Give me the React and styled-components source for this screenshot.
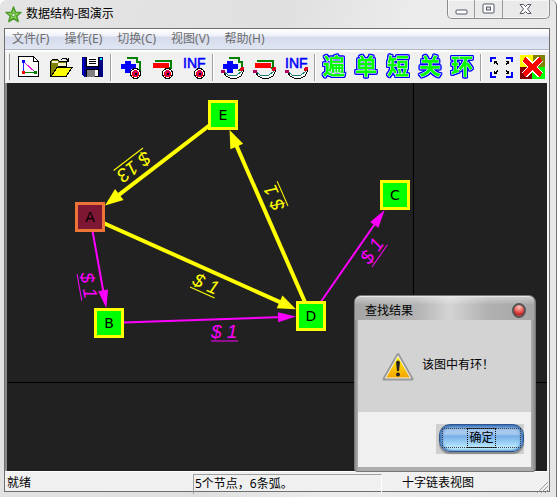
import React from "react";
import styled, { createGlobalStyle, css } from "styled-components";

const GlobalStyle = createGlobalStyle`
  * { box-sizing: border-box; }
  body { margin: 0; background: #fff; }
  body, button {
    font-family: "Noto Sans", "Noto Sans CJK SC", sans-serif;
    font-size: 12px;
    line-height: 18px;
    color: #000;
  }
  button { margin: 0; padding: 0; border: 0; background: none; }
`;

/* ---------- window frame ---------- */

const Window = styled.main`
  display: flex;
  flex-direction: column;
  min-height: 100vh;
  padding: 0 6px 5px 4px;
  border-right: 1px solid #777;
  border-radius: 6px 6px 0 0;
  background: linear-gradient(100deg, #e4e4e4 0%, #e0e0e0 45%, #ececec 65%, #e6e6e6 100%);
`;

const TitleBar = styled.header`
  display: flex;
  height: 28px;
  padding-left: 1px;
`;

const TitleText = styled.h1`
  flex: 1;
  margin: 0;
  padding: 5px 4px 0;
  font-size: 12px;
  font-weight: 400;
  line-height: 18px;
`;

const AppIcon = styled.svg`
  width: 17px;
  height: 17px;
  margin-top: 6px;
`;

const CaptionButtons = styled.div`
  display: flex;
  width: 103px;
  height: 19px;
  border: 1px solid #8c8c8c;
  border-top: 0;
  border-radius: 0 0 5px 5px;
  box-shadow: inset 0 0 0 1px #f6f6f6;
`;

const CaptionButton = styled.button`
  display: flex;
  flex: ${(p) => (p.$wide ? 47 : 27)};
  align-items: center;
  justify-content: center;
  & + & { border-left: 1px solid #9a9a9a; }
`;

const Client = styled.div`
  display: flex;
  flex: 1;
  flex-direction: column;
  border: 1px solid #6f6f6f;
  background: #f0f0f0;
`;

/* ---------- menu and toolbar ---------- */

const MenuBar = styled.nav`
  display: flex;
  gap: 15px;
  height: 21px;
  padding-left: 7px;
  border-bottom: 1px solid #b4b8c4;
  background: linear-gradient(#fff 0, #eef1f8 7px, #d5dbec 8px, #e0e5f2 20px);
`;

const MenuItem = styled.button`
  color: #6d6d6d;
  line-height: 20px;
`;

const ToolBar = styled.div`
  display: flex;
  align-items: center;
  height: 33px;
  padding: 0 0 1px 2px;
  border-top: 2px solid #fff;
`;

const Grip = styled.span`
  width: 3px;
  height: 28px;
  margin-right: 2px;
  border: 1px solid #fff;
  border-right-color: #a0a0a0;
`;

const ToolButton = styled.button`
  display: flex;
  flex: none;
  align-items: center;
  justify-content: center;
  width: 32px;
  height: 28px;
`;

const Separator = styled.span`
  flex: none;
  width: 2px;
  height: 27px;
  margin: 0 2px;
  border-left: 1px solid #a0a0a0;
  border-right: 1px solid #fff;
`;

const ToolIcon = styled.svg`
  display: block;
  width: 25px;
  height: 24px;
  overflow: visible;
`;

const Glyph = styled.span`
  padding-bottom: 6px;
  color: #0f0;
  font-family: "Noto Sans CJK SC", sans-serif;
  font-size: 22px;
  font-weight: 700;
  line-height: 24px;
  -webkit-text-stroke: 1px #fff;
  paint-order: stroke fill;
  filter: drop-shadow(1px 0 0 #00f) drop-shadow(-1px 0 0 #00f) drop-shadow(0 1px 0 #00f) drop-shadow(0 -1px 0 #00f);
`;

/* ---------- graph ---------- */

const Canvas = styled.section`
  position: relative;
  display: flex;
  flex: 1;
  min-height: 386px;
  border-left: 2px solid #8a8a8a;
  border-right: 2px solid #f4f4f4;
  background: #212121;
`;

const GraphDrawing = styled.svg`
  flex: 1;
  width: 100%;
`;

const NodeBox = styled.rect`
  stroke-width: 3px;
  ${(p) => p.$selected
    ? css`fill: #7d1733; stroke: #ed7436;`
    : css`fill: #0f0; stroke: #ff0;`}
`;

const NodeLabel = styled.text`
  font: 14px "DejaVu Sans", sans-serif;
  text-anchor: middle;
`;

const EdgeLabel = styled.text`
  font: italic 19px "Liberation Sans", sans-serif;
`;

/* ---------- dialog ---------- */

const Dialog = styled.section`
  position: absolute;
  right: 11px;
  bottom: -1px;
  display: flex;
  flex-direction: column;
  width: 182px;
  height: 177px;
  padding: 0 4px 4px 3px;
  border: 1px solid #777;
  border-radius: 7px 7px 3px 3px;
  background: linear-gradient(90deg, #8d8d8d, #adadad 3px, #adadad 176px, #8d8d8d);
`;

const DialogTitle = styled.header`
  display: flex;
  align-items: center;
  justify-content: space-between;
  height: 24px;
  margin: 0 -3px;
  padding: 4px 8px 0 10px;
  border-top: 1px solid #e8e8e8;
  border-radius: 6px 6px 0 0;
  background:
    linear-gradient(rgba(255, 255, 255, 0.4), transparent 8px),
    linear-gradient(90deg, #a5a5a5, #b4b4b4 35%, #d4d4d4 53%, #b0b0b0 75%, #a6a6a6);
`;

const DialogHeading = styled.h2`
  margin: 0;
  font-size: 12px;
  font-weight: 400;
  line-height: 18px;
`;

const CloseBall = styled.button`
  width: 14px;
  height: 15px;
  border: 2px solid #555;
  border-radius: 50%;
  background: radial-gradient(circle at 50% 20%, #ffc4bd, #e8554f 50%, #b51f1f 75%, #ff8a80);
`;

const DialogBody = styled.div`
  display: flex;
  flex: 1;
  align-items: center;
  gap: 8px;
  padding: 2px 0 0 24px;
  background: #d3d3d3;
`;

const Message = styled.p`
  margin: 0 0 4px;
`;

const DialogFooter = styled.footer`
  display: flex;
  justify-content: flex-end;
  height: 55px;
  padding: 12px 7px 0 0;
  background: #f0f0f0;
`;

const ButtonBed = styled.div`
  width: 88px;
  height: 30px;
  padding: 0 0 2px 3px;
  background: #cfcfcf;
`;

const OkButton = styled.button`
  display: flex;
  width: 100%;
  height: 100%;
  padding: 3px 2px;
  border: 1px solid #2e568c;
  border-radius: 11px;
  background: linear-gradient(#4078bd 0, #a4c7ee 5px, #a6c9ee 9px, #78aee6 11px, #98cdf5 17px, #c4f2ff 24px);
  box-shadow: inset 2px 0 3px #3c73b8, inset -2px 0 3px #3c73b8, 0 2px 1px #888;
`;

const FocusFrame = styled.span`
  display: flex;
  flex: 1;
  align-items: center;
  justify-content: center;
  border: 1px dotted #444;
`;

const FocusText = styled.span`
  padding: 0 1px;
  border: 1px dotted #111;
  line-height: 18px;
`;

/* ---------- status bar ---------- */

const StatusBar = styled.footer`
  display: grid;
  grid-template-columns: 188px 189px 1fr auto;
  height: 20px;
  border-top: 1px solid #fff;
  line-height: 22px;
`;

const StatusCell = styled.span`
  padding-left: ${(p) => (p.$indent ? 20 : 2)}px;
  ${(p) => p.$sunken && css`
    padding-left: 1px;
    border: 1px solid #a0a0a0;
    border-width: 1px 0 0 1px;
    border-right: 1px solid #fff;
    margin-top: 2px;
    line-height: 17px;
  `}
`;

const SizeGrip = styled.svg`
  align-self: end;
  width: 13px;
  height: 13px;
`;

/* ---------- icons ---------- */

function Icon({ children }) {
  return (
    <ToolIcon viewBox="0 0 25 24" shapeRendering="crispEdges" aria-hidden="true">
      {children}
    </ToolIcon>
  );
}

const NodeMark = () => (
  <g>
    <circle cx="17.5" cy="18.500" r="5.500" fill="#000" />
    <circle cx="17.5" cy="18.500" r="4.500" fill="#fff" />
    <circle cx="17.5" cy="18.500" r="3.500" fill="#f00" />
    <path d="M16 16.500h3M15.500 17v3M19.500 17v3M16 20.500h3" fill="none" stroke="#b000a0" />
    <rect x="17" y="18" width="2" height="2" fill="#000" />
  </g>
);

const ArcMark = () => (
  <g fill="none">
    <path d="M3 17l2 3 4 2h7l4-2 3-4" stroke="#fff" strokeWidth="4" />
    <path d="M4 18l2 3 4 2h7l4-2 2-4v-3" stroke="#000" />
    <path d="M3 16l5 4h9l4-3 1-4" stroke="#167c70" />
    <circle cx="3" cy="16.500" r="2" fill="#b00060" />
    <circle cx="22" cy="14" r="2" fill="#e00020" />
  </g>
);

const Plus = () => (
  <g>
    <path d="M9 3h10v4h3v8h-4" fill="none" stroke="#008000" strokeWidth="2" />
    <path d="M6 8V5h8v3h5v7h-5v4H6v-4H2V8z" fill="#f0f0f0" />
    <path d="M7 6h6v3h5v5h-5v4H7v-4H3V9h4z" fill="#00f" />
  </g>
);

const Minus = () => (
  <g>
    <path d="M6 7V6h15v7h-2" fill="none" stroke="#008000" strokeWidth="2" />
    <path d="M3 8h16v5H3z" fill="#f00" />
  </g>
);

const Inf = () => (
  <text x="1" y="13" fill="#00f" fontFamily="Liberation Sans, sans-serif" fontSize="14" stroke="#00f" strokeWidth="0.500">INF</text>
);

const icons = {
  new: (
    <Icon>
      <path d="M2.5 1.5h15l5 5v15h-20z" fill="#fff" stroke="#000" />
      <path d="M17.5 1.5v5h5" fill="none" stroke="#000" />
      <path d="M7.5 7v10" stroke="#2020ff" />
      <path d="M8 7l12 11" stroke="#e020e0" />
      <path d="M8 17.5h12" stroke="#008000" />
      <rect x="6" y="5" width="3" height="3" fill="#00f" />
      <rect x="6" y="16" width="3" height="3" fill="#f00" />
      <rect x="18" y="16" width="3" height="3" fill="#008000" />
    </Icon>
  ),
  open: (
    <Icon>
      <path d="M2.5 21.5V6.5l2-2h5l2 2h7v5h-8z" fill="#808000" stroke="#000" />
      <path d="M4 6h6v2h8v3H9l-5 6z" fill="#f5f5c8" />
      <path d="M3 8h7v3l-5 9H3z" fill="#808000" />
      <path d="M3 21.5l6-9h15l-6 9z" fill="#ff0" stroke="#000" />
      <path d="M13 4.5l2-1h3l2 2M20.500 3v3h-3" fill="none" stroke="#000" />
    </Icon>
  ),
  save: (
    <Icon>
      <path d="M2 2h21v20H4l-2-2z" fill="#000080" />
      <path d="M3.500 3v17" stroke="#00f" />
      <path d="M6 2h13v10H6z" fill="#000" />
      <path d="M7 2h11v9H7z" fill="#fff" />
      <path d="M9 4.500h7M9 6.500h7M9 8.500h7" stroke="#000" />
      <path d="M6 14h13v8H6z" fill="#000" />
      <path d="M7 15h8v7H7z" fill="#808080" />
      <path d="M15 15h3v6h-3z" fill="#fff" />
      <path d="M20 3h2v2h-2z" fill="#0ff" />
    </Icon>
  ),
  addNode: <Icon><Plus /><NodeMark /></Icon>,
  removeNode: <Icon><Minus /><NodeMark /></Icon>,
  infNode: <Icon><Inf /><NodeMark /></Icon>,
  addArc: <Icon><Plus /><ArcMark /></Icon>,
  removeArc: <Icon><Minus /><ArcMark /></Icon>,
  infArc: <Icon><Inf /><ArcMark /></Icon>,
  fit: (
    <Icon>
      <path d="M2 7V2h6v2H4v3zM18 2h7v5h-2V4h-5zM2 17h2v4h4v2H2zM23 17h2v6h-7v-2h5z" fill="#00f" />
      <path d="M6 6h3v1H8l2 2-1 1-2-2v1H6zM21 6h-3v1h1l-2 2 1 1 2-2v1h1zM6 19h3v-1H8l2-2-1-1-2 2v-1H6zM21 19h-3v-1h1l-2-2 1-1 2 2v-1h1z" fill="#000" />
    </Icon>
  ),
  exit: (
    <Icon>
      <path d="M0 0h13v12H0z" fill="#ff0" />
      <path d="M13 0h12v12H13z" fill="#808000" />
      <path d="M0 12h12v12H0z" fill="#800000" />
      <path d="M12 12h13v12H12z" fill="#0f0" />
      <path d="M4 4l17 16M21 4L4 20" stroke="#fff" strokeWidth="7" />
      <path d="M4 4l17 16M21 4L4 20" stroke="#f00" strokeWidth="5" />
    </Icon>
  ),
};

const toolGroups = [
  [["新建", "new"], ["打开", "open"], ["保存", "save"]],
  [["添加节点", "addNode"], ["删除节点", "removeNode"], ["节点设为无穷", "infNode"]],
  [["添加弧", "addArc"], ["删除弧", "removeArc"], ["弧设为无穷", "infArc"]],
  [["遍"], ["单"], ["短"], ["关"], ["环"]],
  [["适应窗口", "fit"], ["退出", "exit"]],
];

/* ---------- graph data ---------- */

const nodes = {
  A: { x: 83, y: 134, selected: true },
  B: { x: 102, y: 240 },
  C: { x: 388, y: 112 },
  D: { x: 304, y: 233 },
  E: { x: 216, y: 32 },
};

const edges = [
  { from: "A", to: "B", text: "$ 1", color: "#f0f", line: 2, lx: 70, ly: 191 },
  { from: "B", to: "D", text: "$ 1", color: "#f0f", line: 2, lx: 204, ly: 258, turn: 0 },
  { from: "D", to: "C", text: "$ 1", color: "#f0f", line: 2, lx: 365, ly: 184 },
  { from: "E", to: "A", text: "$ 13", color: "#ff0", line: 4, lx: 136, ly: 65 },
  { from: "A", to: "D", text: "$ 1", color: "#ff0", line: 4, lx: 183, ly: 204 },
  { from: "D", to: "E", text: "$ 1", color: "#ff0", line: 4, lx: 281, ly: 123 },
];

function Edge({ edge }) {
  const a = nodes[edge.from];
  const b = nodes[edge.to];
  const dx = b.x - a.x;
  const dy = b.y - a.y;
  const angle = (Math.atan2(dy, dx) * 180) / Math.PI;
  const k = 15 / Math.max(Math.abs(dx), Math.abs(dy));
  const tipX = b.x - dx * k;
  const tipY = b.y - dy * k;
  const half = edge.line === 4 ? 7 : 5;
  const turn = edge.turn ?? angle;
  const length = edge.text.length > 3 ? 37 : 27;
  return (
    <g fill={edge.color} stroke={edge.color}>
      <line x1={a.x} y1={a.y} x2={tipX - dx * k * 0.4} y2={tipY - dy * k * 0.4} strokeWidth={edge.line} />
      <path d={`M0 0L-18 ${half}V${-half}z`} stroke="none" transform={`translate(${tipX} ${tipY}) rotate(${angle})`} />
      <g transform={`translate(${edge.lx} ${edge.ly}) rotate(${turn})`}>
        <EdgeLabel x="0" y="-3" stroke="none">{edge.text}</EdgeLabel>
        <line x1="0" y1="0" x2={length} y2="0" strokeWidth="1" />
      </g>
    </g>
  );
}

function Graph() {
  return (
    <GraphDrawing role="img" aria-label="图">
      <path d="M406 0V299M1 299H540M406 299V400" stroke="#000" fill="none" shapeRendering="crispEdges" />
      {edges.map((edge) => <Edge key={edge.from + edge.to} edge={edge} />)}
      {Object.entries(nodes).map(([name, n]) => (
        <g key={name}>
          <NodeBox x={n.x - 13.5} y={n.y - 13.5} width="27" height="27" $selected={n.selected} />
          <NodeLabel x={n.x} y={n.y + 5}>{name}</NodeLabel>
        </g>
      ))}
    </GraphDrawing>
  );
}

function ResultDialog() {
  return (
    <Dialog role="dialog" aria-labelledby="result-title">
      <DialogTitle>
        <DialogHeading id="result-title">查找结果</DialogHeading>
        <CloseBall aria-label="关闭提示" />
      </DialogTitle>
      <DialogBody>
        <svg width="32" height="30" viewBox="0 0 32 30" aria-hidden="true">
          <defs>
            <linearGradient id="warn" x2="0" y2="1">
              <stop offset="0" stopColor="#fff200" />
              <stop offset="1" stopColor="#f5a300" />
            </linearGradient>
          </defs>
          <path d="M16 2.500L30 27H2z" fill="#aaa" stroke="#999" strokeWidth="3" strokeLinejoin="round" />
          <path d="M16 4L28.500 26h-25z" fill="url(#warn)" stroke="#f4f4ea" strokeLinejoin="round" />
          <path d="M14 10q2-3 4 0l-1 9h-2z" fill="#222" />
          <circle cx="16" cy="22.500" r="2" fill="#222" />
        </svg>
        <Message>该图中有环！</Message>
      </DialogBody>
      <DialogFooter>
        <ButtonBed>
          <OkButton><FocusFrame><FocusText>确定</FocusText></FocusFrame></OkButton>
        </ButtonBed>
      </DialogFooter>
    </Dialog>
  );
}

export default function App() {
  return (
    <>
      <GlobalStyle />
      <Window>
        <TitleBar>
          <AppIcon viewBox="0 0 17 17" aria-hidden="true">
            <path d="M8.500 1l2 5.200 5.500.3-4.300 3.500 1.500 5.500-4.700-3-4.700 3L5.300 10 1 6.500l5.500-.3z" fill="#8bd65a" stroke="#4c9a2b" strokeWidth="1.500" strokeLinejoin="round" />
            <circle cx="8.500" cy="9" r="1.800" fill="#d9ecd0" stroke="#4c9a2b" />
          </AppIcon>
          <TitleText>数据结构-图演示</TitleText>
          <CaptionButtons>
            <CaptionButton aria-label="最小化">
              <svg width="13" height="13"><rect x="1" y="7" width="11" height="4" rx="1" fill="#fff" stroke="#535666" /></svg>
            </CaptionButton>
            <CaptionButton aria-label="最大化">
              <svg width="13" height="12">
                <rect x="1" y="1" width="11" height="9" rx="1" fill="#fff" stroke="#535666" />
                <rect x="4.500" y="4" width="4" height="3" fill="#e5e5e5" stroke="#535666" />
              </svg>
            </CaptionButton>
            <CaptionButton $wide aria-label="关闭">
              <svg width="13" height="12">
                <path d="M1 1.500h3.500l2 2 2-2H12L8.500 6l3.500 4.500H8.500l-2-2-2 2H1L4.500 6z" fill="#fff" stroke="#535666" />
              </svg>
            </CaptionButton>
          </CaptionButtons>
        </TitleBar>
        <Client>
          <MenuBar aria-label="主菜单">
            {["文件(F)", "操作(E)", "切换(C)", "视图(V)", "帮助(H)"].map((m) => <MenuItem key={m}>{m}</MenuItem>)}
          </MenuBar>
          <ToolBar role="toolbar">
            <Grip />
            {toolGroups.map((group, i) => (
              <React.Fragment key={i}>
                {i > 0 && <Separator />}
                {group.map(([name, icon]) => (
                  <ToolButton key={name} aria-label={name}>
                    {icon ? icons[icon] : <Glyph>{name}</Glyph>}
                  </ToolButton>
                ))}
              </React.Fragment>
            ))}
          </ToolBar>
          <Canvas>
            <Graph />
            <ResultDialog />
          </Canvas>
          <StatusBar>
            <StatusCell>就绪</StatusCell>
            <StatusCell $sunken>5个节点，6条弧。</StatusCell>
            <StatusCell $indent>十字链表视图</StatusCell>
            <SizeGrip viewBox="0 0 13 13" aria-hidden="true">
              <path d="M1 12L12 1M5 12l7-7M9 12l3-3" stroke="#999" strokeWidth="1" />
            </SizeGrip>
          </StatusBar>
        </Client>
      </Window>
    </>
  );
}
